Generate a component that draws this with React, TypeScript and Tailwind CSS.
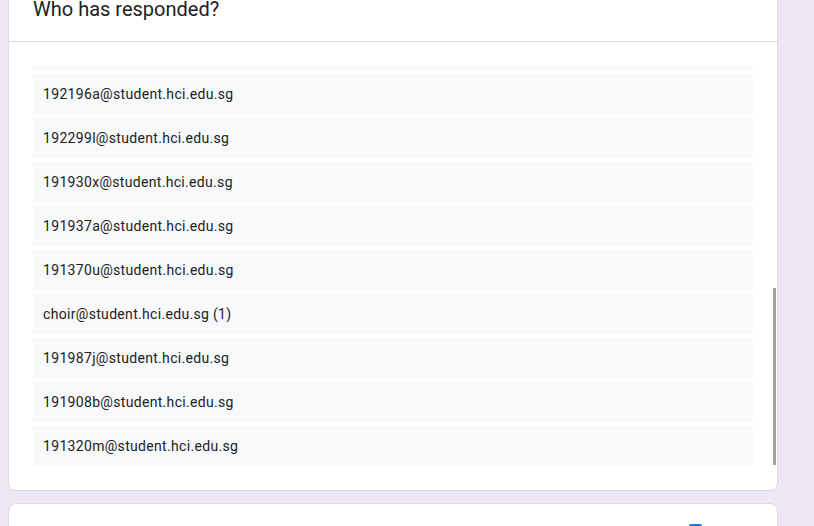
import React, { useEffect, useRef } from 'react'

const emails = [
  '191402k@student.hci.edu.sg',
  '191755d@student.hci.edu.sg',
  '192031e@student.hci.edu.sg',
  '191118c@student.hci.edu.sg',
  '191664h@student.hci.edu.sg',
  '192287b@student.hci.edu.sg',
  '191503n@student.hci.edu.sg',
  '191846p@student.hci.edu.sg',
  '192010r@student.hci.edu.sg',
  '191271t@student.hci.edu.sg',
  '191998w@student.hci.edu.sg',
  '191425y@student.hci.edu.sg',
  '192196a@student.hci.edu.sg',
  '192299l@student.hci.edu.sg',
  '191930x@student.hci.edu.sg',
  '191937a@student.hci.edu.sg',
  '191370u@student.hci.edu.sg',
  'choir@student.hci.edu.sg (1)',
  '191987j@student.hci.edu.sg',
  '191908b@student.hci.edu.sg',
  '191320m@student.hci.edu.sg',
]

export default function App() {
  const listRef = useRef<HTMLDivElement>(null)

  useEffect(() => {
    if (listRef.current) listRef.current.scrollTop = listRef.current.scrollHeight
  }, [])

  return (
    <div className="h-[526px] overflow-hidden bg-[#ede7f6] pl-[8px] font-['Roboto',sans-serif] text-[#202124]">
      <div className="-mt-[30px] w-[770px] rounded-lg border border-[#dadce0] bg-white">
        <div className="border-b border-[#dadce0] px-6 pt-6 pb-[18px]">
          <h2 className="text-[20px] leading-[28px] font-normal">Who has responded?</h2>
        </div>
        <div className="py-6">
          <div className="relative">
            <div
              ref={listRef}
              className="flex h-[400px] flex-col gap-1 overflow-y-auto pl-6 pr-6 [scrollbar-width:none] [&::-webkit-scrollbar]:hidden"
            >
              {emails.map((e, i) => (
                <div key={i} className="flex h-10 shrink-0 items-center bg-[#f8f9fa] px-2.5 text-[14px] tracking-[0.32px]">
                  {e}
                </div>
              ))}
            </div>
            {/* scrollbar thumb */}
            <div className="absolute top-[222px] right-[1px] h-[177px] w-[3px] bg-[#a3a3a3]" />
          </div>
        </div>
      </div>

      <div className="mt-3 h-[60px] w-[770px] rounded-lg border border-[#dadce0] bg-white">
        <div className="flex justify-end pt-5 pr-[75px]">
          <div className="h-[13px] w-[13px] rounded-[2px] bg-[#1a73e8]" />
        </div>
      </div>
    </div>
  )
}
